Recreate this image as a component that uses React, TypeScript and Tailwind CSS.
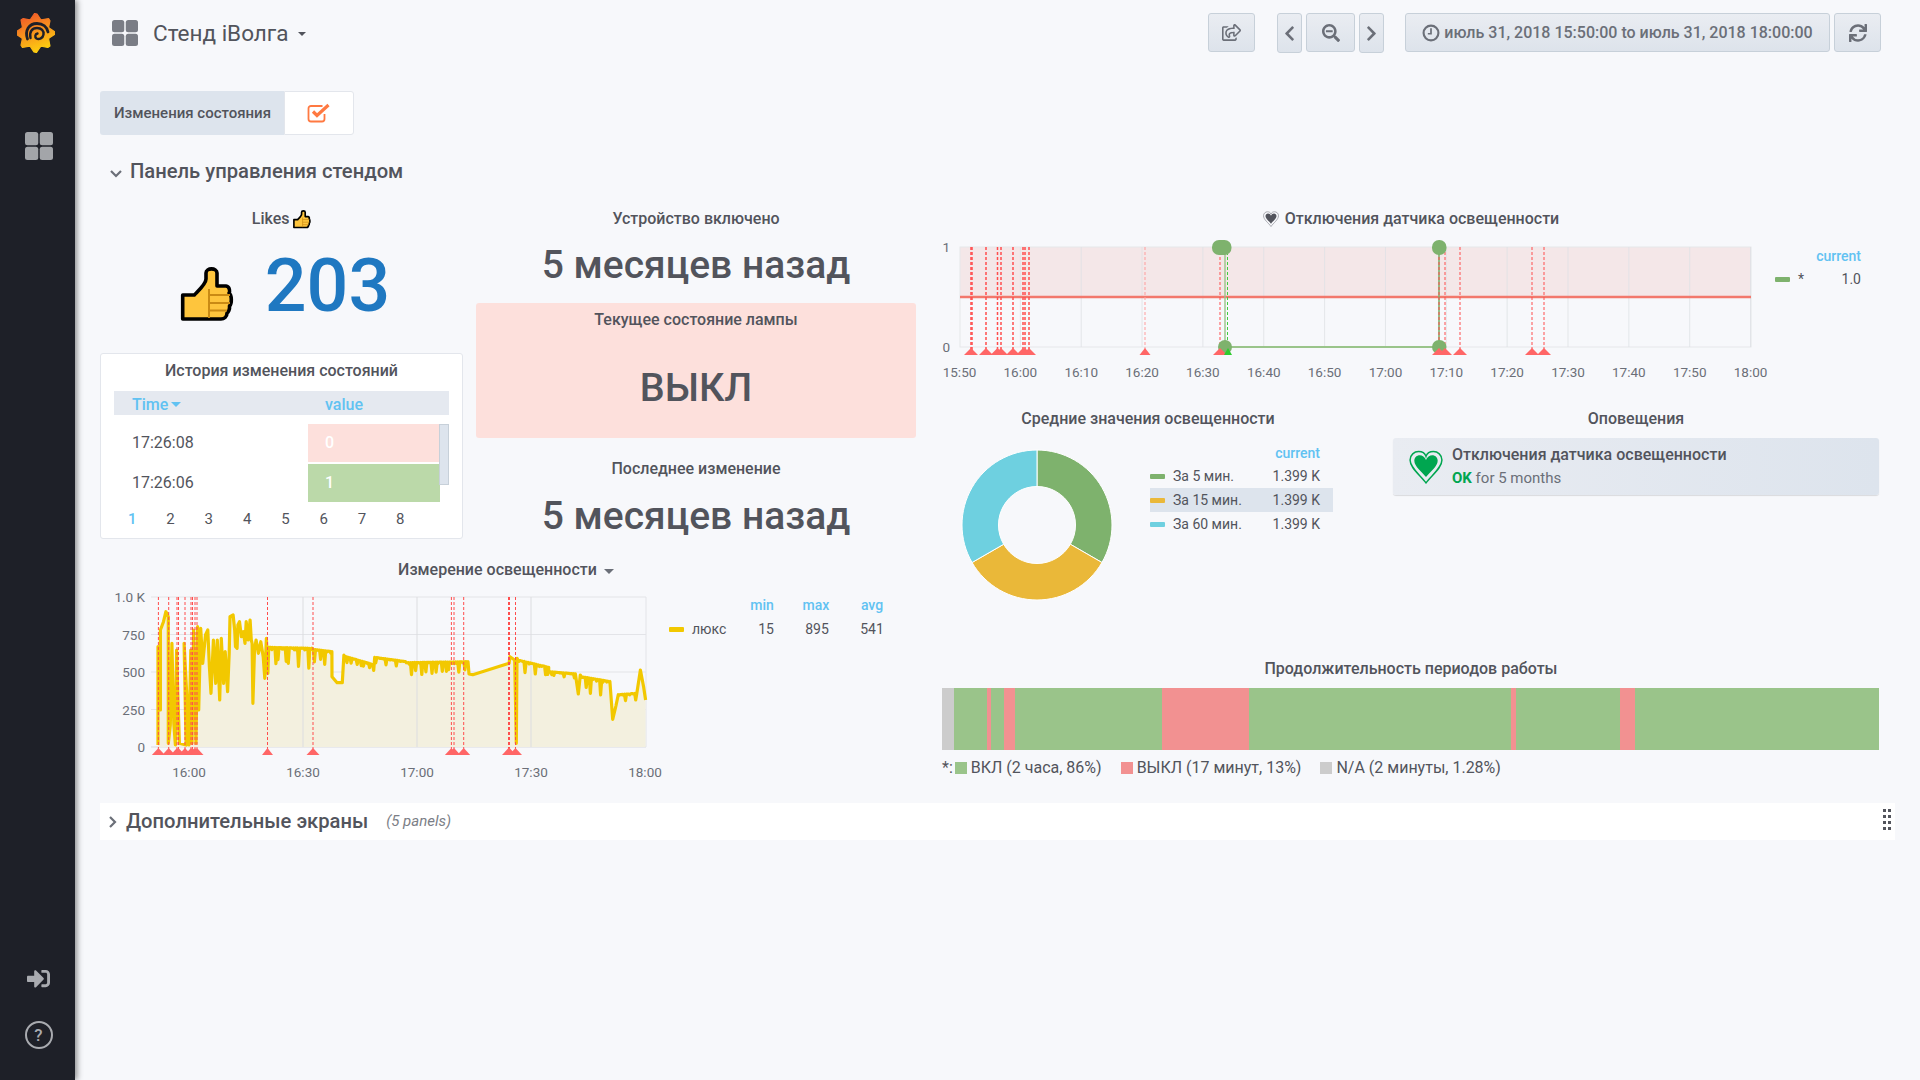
import React from "react";
import { FaChevronLeft, FaChevronRight, FaSearchMinus, FaSignInAlt, FaSync, FaRegShareSquare } from "react-icons/fa";

const AXIS = "#6b6f78";

function GridIcon({ size, color, gap }: { size: number; color: string; gap: number }) {
  const c = (size - gap) / 2;
  return (
    <svg width={size} height={size} viewBox={`0 0 ${size} ${size}`}>
      <rect x={0} y={0} width={c} height={c} rx={2.5} fill={color} />
      <rect x={c + gap} y={0} width={c} height={c} rx={2.5} fill={color} />
      <rect x={0} y={c + gap} width={c} height={c} rx={2.5} fill={color} />
      <rect x={c + gap} y={c + gap} width={c} height={c} rx={2.5} fill={color} />
    </svg>
  );
}

function Logo() {
  const teeth = 8;
  const pts: string[] = [];
  const step = (Math.PI * 2) / teeth;
  for (let i = 0; i < teeth; i++) {
    const a0 = i * step - Math.PI / 2 - 0.35;
    const seq: [number, number][] = [
      [14.5, 0],
      [19.5, step * 0.38],
      [19, step * 0.55],
      [14.5, step * 0.9],
    ];
    seq.forEach(([r, d]) => pts.push(`${18.5 + r * Math.cos(a0 + d)},${20 + r * Math.sin(a0 + d)}`));
  }
  return (
    <svg width="38" height="40" viewBox="0 0 38 40">
      <defs>
        <linearGradient id="lg" x1="0.2" y1="0" x2="0.6" y2="1">
          <stop offset="0" stopColor="#f0542a" />
          <stop offset="0.5" stopColor="#f7941d" />
          <stop offset="1" stopColor="#fdd10f" />
        </linearGradient>
      </defs>
      <polygon points={pts.join(" ")} fill="url(#lg)" stroke="url(#lg)" strokeWidth="1.2" strokeLinejoin="round" />
      <path d="M10.5 26 C7.5 17.5 12 10.5 20 10.5 C26 10.5 30 14 31 19" fill="none" stroke="#1e2028" strokeWidth="2.8" strokeLinecap="round" />
      <path d="M13.5 25 C12 19 15 15 20 15 C24.5 15 27 18 26.5 21.5 C26 25 22 27 19.5 25.5 C17.5 24 18 21 20.5 20.5" fill="none" stroke="#1e2028" strokeWidth="2.4" strokeLinecap="round" />
    </svg>
  );
}

function Thumb({ scale }: { scale: number }) {
  return (
    <svg width={54 * scale} height={56 * scale} viewBox="0 0 54 56" className="block">
      <path
        d="M2.7 29 H14.3 C19 24 26 18 26 13 V7 C26 1.5 37 1.5 37 7 V20 H46 C50 20.5 50 26 49 27 C52 29 52 38 49.5 40 C50 44 48 46.5 47 47 C47 51 44 53 41 53 H2.7 Z"
        fill="#fec53d"
        stroke="#000"
        strokeWidth={scale < 0.5 ? 5 : 3.6}
        strokeLinejoin="round"
      />
      <path d="M29 29 H50 M29 37 H50 M29 44.5 H47" stroke="#c98a14" strokeWidth="2" fill="none" />
      <path d="M29 23 V52" stroke="#c98a14" strokeWidth="2" fill="none" />
    </svg>
  );
}

function Heart({ size, fill, stroke, outline }: { size: number; fill: string; stroke: string; outline: boolean }) {
  return (
    <svg width={size} height={size} viewBox="0 0 32 32">
      {outline && (
        <path
          d="M16 31 C11 24 1 17 1 9.5 C1 4.5 5 1.5 9 1.5 C12 1.5 15 3 16 6 C17 3 20 1.5 23 1.5 C27 1.5 31 4.5 31 9.5 C31 17 21 24 16 31 Z"
          fill="none"
          stroke={stroke}
          strokeWidth="1.4"
        />
      )}
      <path
        d="M16 25.5 C12.5 20.5 5 15.5 5 10 C5 7 7.5 5 10 5 C12.5 5 15 6.5 16 9.5 C17 6.5 19.5 5 22 5 C24.5 5 27 7 27 10 C27 15.5 19.5 20.5 16 25.5 Z"
        fill={fill}
      />
    </svg>
  );
}

function Title({ children }: { children: React.ReactNode }) {
  return <div className="h-[22px] flex items-center justify-center text-[16px] font-medium leading-none">{children}</div>;
}

function Stat({ title, height, mt }: { title: string; height: string; mt: string }) {
  return (
    <div className={`${height} flex flex-col items-center`}>
      <Title>{title}</Title>
      <div className={`${mt} text-[39px] leading-[46px] font-medium`}>5 месяцев назад</div>
    </div>
  );
}

function Btn({ w, h = "h-[39px]", children }: { w: string; h?: string; children: React.ReactNode }) {
  return (
    <div
      className={`${w} ${h} flex items-center justify-center rounded-[3px] border border-[#c7d0d9] bg-gradient-to-b from-[#eaedf2] to-[#dde3eb] text-[#6b6f78]`}
    >
      {children}
    </div>
  );
}

function Tri({ x, y, color = "#ff6666", w = 7 }: { x: number; y: number; color?: string; w?: number }) {
  return <polygon points={`${x - w},${y} ${x + w},${y} ${x},${y - 7}`} fill={color} />;
}

function SensorChart() {
  const ox = 942;
  const oy = 235;
  const X = (x: number) => x - ox;
  const Y = (y: number) => y - oy;
  const labels = ["15:50", "16:00", "16:10", "16:20", "16:30", "16:40", "16:50", "17:00", "17:10", "17:20", "17:30", "17:40", "17:50", "18:00"];
  const ann = [971, 972, 986, 997.5, 1001, 1013, 1023, 1025, 1029, 1220, 1439, 1445, 1460, 1532, 1544];
  return (
    <svg width="835" height="150" className="block font-[Roboto,sans-serif]">
      <rect x={X(960)} y={Y(247)} width={791} height={50} fill="#f4e7e8" />
      <rect x={X(960)} y={Y(247)} width={791} height={100} fill="none" stroke="#e6e7ea" />
      {labels.map((l, i) => {
        const x = 959.5 + i * 60.85;
        return (
          <g key={l}>
            {i > 0 && <line x1={X(x)} x2={X(x)} y1={Y(247)} y2={Y(347)} stroke="#dfe1e5" strokeOpacity="0.8" />}
            <text x={X(x)} y={Y(377)} textAnchor="middle" fontSize="13.5" fill={AXIS}>
              {l}
            </text>
          </g>
        );
      })}
      <line x1={X(960)} x2={X(1751)} y1={Y(297)} y2={Y(297)} stroke="#f2786c" strokeWidth="2.4" />
      <text x={X(950)} y={Y(252)} textAnchor="end" fontSize="13.5" fill={AXIS}>1</text>
      <text x={X(950)} y={Y(352)} textAnchor="end" fontSize="13.5" fill={AXIS}>0</text>
      <line x1={X(1228)} x2={X(1439)} y1={Y(347)} y2={Y(347)} stroke="#9ac48a" strokeWidth="2.2" />
      <line x1={X(1225)} x2={X(1225)} y1={Y(247)} y2={Y(347)} stroke="#9ac48a" strokeWidth="1.4" />
      <line x1={X(1227.5)} x2={X(1227.5)} y1={Y(247)} y2={Y(350)} stroke="#3fce3f" strokeWidth="1" strokeDasharray="3 2" />
      <line x1={X(1439)} x2={X(1439)} y1={Y(247)} y2={Y(347)} stroke="#7eb26d" strokeWidth="1.6" />
      {ann.map((x, i) => (
        <line key={i} x1={X(x)} x2={X(x)} y1={Y(247)} y2={Y(350)} stroke="#ff4d4d" strokeWidth={x < 1030 ? 1.5 : 1} strokeDasharray="3 2" />
      ))}
      <line x1={X(1145)} x2={X(1145)} y1={Y(247)} y2={Y(350)} stroke="#ff9d9d" strokeWidth="1" strokeDasharray="3 2" />
      <rect x={X(1212)} y={Y(240)} width={19.5} height={15} rx={7} fill="#7eb26d" />
      <rect x={X(1432)} y={Y(240)} width={14.5} height={15} rx={7} fill="#7eb26d" />
      <rect x={X(1218)} y={Y(340)} width={14} height={14} rx={7} fill="#7eb26d" />
      <rect x={X(1432)} y={Y(340)} width={14.5} height={14} rx={7} fill="#7eb26d" />
      {[971, 986, 997.5, 1001, 1013, 1023, 1025, 1029, 1145, 1220, 1439, 1445, 1460, 1532, 1544].map((x, i) => (
        <Tri key={i} x={X(x)} y={Y(355)} w={x === 1145 ? 5.5 : 7} />
      ))}
      <Tri x={X(1228)} y={Y(355)} color="#2ecc2e" w={4} />
    </svg>
  );
}

function jag(x0: number, x1: number, y0: number, y1: number, amp: number, seed: number) {
  const out: [number, number][] = [];
  let i = 0;
  for (let x = x0; x < x1; x += 2.6) {
    const t = (x - x0) / (x1 - x0);
    const base = y0 + (y1 - y0) * t;
    const n = Math.abs(Math.sin(x * 0.37 + seed) * Math.sin(x * 0.113 + seed * 2));
    const dip = n > 0.55 ? amp * n : amp * 0.22 * n;
    out.push([x, base + (i % 2 === 0 ? 0 : dip)]);
    i++;
  }
  return out;
}

function buildLine() {
  const a: [number, number][] = [
    [172, 585], [172, 290], [178, 480], [178, 240], [186, 215], [192, 185], [198, 200], [198, 580], [203, 525], [207, 280], [212, 520], [216, 585],
    [219, 300], [222, 430], [226, 580], [243, 585], [238, 280], [244, 420], [250, 585], [255, 300], [258, 580], [262, 240], [268, 580], [272, 230],
    [275, 480], [280, 235], [285, 340], [292, 255], [298, 240], [302, 350], [306, 430], [312, 270], [318, 400], [322, 270], [328, 450], [332, 265],
    [338, 400], [342, 305], [348, 425], [352, 310], [354, 200], [362, 195], [366, 240], [368, 290], [372, 295], [374, 225], [378, 215], [383, 260], [388, 245], [392, 280], [395, 215], [400, 270], [405, 210], [408, 270],
    [410, 280], [412, 460], [416, 300], [420, 270], [426, 310], [432, 275], [438, 320], [442, 385], [446, 265], [450, 370],
  ];
  const b: [number, number][] = [
    ...jag(452, 565, 292, 295, 60, 1),
    ...jag(565, 612, 298, 305, 45, 2),
    [612, 380], [625, 398], [638, 398], [642, 315],
    ...jag(642, 720, 318, 345, 22, 3),
    ...jag(720, 800, 322, 335, 18, 4),
    ...jag(800, 960, 338, 335, 42, 5),
    [968, 374], [1060, 340], [1062, 320],
    [1074, 330], [1078, 580], [1080, 325],
    ...jag(1082, 1160, 330, 352, 35, 6),
    ...jag(1160, 1230, 365, 372, 12, 7),
    [1235, 432], [1240, 375],
    ...jag(1242, 1318, 380, 395, 50, 8),
    [1322, 508], [1330, 468],
    ...jag(1336, 1385, 434, 430, 22, 9),
    [1392, 360], [1400, 410], [1405, 450],
  ];
  return [...a, ...b];
}

function LightChart() {
  const ox = 100;
  const oy = 585;
  const X = (x: number) => x - ox;
  const Y = (y: number) => y - oy;
  const zx = (p: number) => X(90 + p / 2.529);
  const zy = (p: number) => Y(550 + p / 3);
  const pts = buildLine();
  const line = pts.map(([x, y]) => `${zx(x).toFixed(1)},${zy(y).toFixed(1)}`).join(" ");
  const area = `${zx(172)},${Y(747)} ${line} ${zx(1405)},${Y(747)}`;
  const ann = [158.4, 168.7, 177, 178.5, 185, 191, 192.5, 195, 197, 267.5, 313, 451.4, 454, 463.7, 508.5, 509.5, 515.5];
  return (
    <svg width="569" height="205" className="block shrink-0 font-[Roboto,sans-serif]">
      {[597, 634.5, 672, 709.5, 747].map((y, i) => (
        <g key={y}>
          <line x1={X(151)} x2={X(646)} y1={Y(y)} y2={Y(y)} stroke="#e3e4e8" strokeWidth={i === 4 ? 1.5 : 1.2} />
          <text x={X(145)} y={Y(y + 5)} textAnchor="end" fontSize="13.5" fill={AXIS}>
            {["1.0 K", "750", "500", "250", "0"][i]}
          </text>
        </g>
      ))}
      <line x1={X(646)} x2={X(646)} y1={Y(597)} y2={Y(747)} stroke="#e3e4e8" />
      <polygon points={area} fill="#f3f0df" />
      {["16:00", "16:30", "17:00", "17:30", "18:00"].map((l, i) => {
        const x = 189 + i * 114;
        return (
          <g key={l}>
            {i > 0 && i < 4 && <line x1={X(x)} x2={X(x)} y1={Y(597)} y2={Y(747)} stroke="#dcdde0" />}
            <text x={X(x)} y={Y(777)} textAnchor="middle" fontSize="13.5" fill={AXIS}>
              {l}
            </text>
          </g>
        );
      })}
      <polyline points={line} fill="none" stroke="#f2c800" strokeWidth="3.2" strokeLinejoin="round" />
      {ann.map((x, i) => (
        <line key={i} x1={X(x)} x2={X(x)} y1={Y(597)} y2={Y(750)} stroke="#ff4d4d" strokeWidth="1" strokeDasharray="3 2" />
      ))}
      {ann.map((x, i) => (
        <Tri key={i} x={X(x)} y={Y(755)} w={i === 9 ? 5.5 : 6.5} />
      ))}
    </svg>
  );
}

function Donut() {
  const cx = 76;
  const cy = 76;
  const R = 75;
  const r = 38.5;
  const arc = (a0: number, a1: number) => {
    const p = (rad: number, a: number) => `${cx + rad * Math.sin(a)} ${cy - rad * Math.cos(a)}`;
    return `M${p(R, a0)} A${R} ${R} 0 0 1 ${p(R, a1)} L${p(r, a1)} A${r} ${r} 0 0 0 ${p(r, a0)} Z`;
  };
  const t = (Math.PI * 2) / 3;
  return (
    <svg width="152" height="152" className="block">
      <path d={arc(0, t)} fill="#7eb26d" stroke="#fff" strokeWidth="1" />
      <path d={arc(t, 2 * t)} fill="#eab839" stroke="#fff" strokeWidth="1" />
      <path d={arc(2 * t, 3 * t)} fill="#6ed0e0" stroke="#fff" strokeWidth="1" />
    </svg>
  );
}

function PieRow({ color, label, active }: { color: string; label: string; active?: boolean }) {
  return (
    <div className={`h-[24px] flex items-center text-[14px] ${active ? "bg-[#dde4ed]" : ""}`}>
      <span className="w-[15px] h-[5px] rounded-[1px] mr-[8px]" style={{ backgroundColor: color }} />
      <span className="flex-1">{label}</span>
      <span className="mr-[13px]">1.399 K</span>
    </div>
  );
}

function Timeline() {
  const segs: [number, string][] = [
    [954, "#cccccc"], [987, "#9ac48a"], [991, "#f29191"], [1004, "#9ac48a"], [1015, "#f29191"], [1162, "#9ac48a"], [1249, "#f29191"], [1511, "#9ac48a"],
    [1516, "#f29191"], [1620, "#9ac48a"], [1634.5, "#f29191"], [1878.5, "#9ac48a"],
  ];
  let prev = 942;
  return (
    <div className="mt-[8px] flex h-[62px] w-[937px]">
      {segs.map(([end, c], i) => {
        const w = end - prev;
        prev = end;
        return <div key={i} className="h-full" style={{ width: w, backgroundColor: c }} />;
      })}
    </div>
  );
}

function Legend({ color, children }: { color: string; children: React.ReactNode }) {
  return (
    <span className="flex items-center mr-[19px]">
      <span className="w-[12px] h-[12px] mr-[4px]" style={{ backgroundColor: color }} />
      {children}
    </span>
  );
}

function HistoryTable() {
  return (
    <div className="h-[186px] rounded-[3px] border border-[#e3e6ec] bg-white px-[13px] flex flex-col">
      <div className="h-[27px] flex items-end justify-center text-[16px] font-medium leading-[20px]">История изменения состояний</div>
      <div className="mt-[10px] h-[24px] bg-[#e5e9f0] flex items-center pt-[3px] font-medium text-[16px] text-[#61c2f2]">
        <span className="w-[211px] pl-[18px] flex items-center">
          Time
          <span className="ml-[3px] w-0 h-0 border-x-[5px] border-x-transparent border-t-[5px] border-t-[#61c2f2]" />
        </span>
        <span>value</span>
      </div>
      <div className="relative mt-[9px] text-[16px]">
        <div className="flex h-[38px]">
          <span className="w-[194px] pl-[18px] flex items-center">17:26:08</span>
          <span className="w-[132px] bg-[#fde0dc] text-white font-medium flex items-center pl-[17px]">0</span>
        </div>
        <div className="mt-[2px] flex h-[38px]">
          <span className="w-[194px] pl-[18px] flex items-center">17:26:06</span>
          <span className="w-[132px] bg-[#bbd9a9] text-white font-medium flex items-center pl-[17px]">1</span>
        </div>
        <div className="absolute right-0 top-0 h-[61px] w-[10px] bg-[#dde4ed] border border-[#c7d0d9]" />
      </div>
      <div className="flex mt-[7px] h-[20px] items-center text-[15px] pl-[14px]">
        {["1", "2", "3", "4", "5", "6", "7", "8"].map((n, i) => (
          <span key={n} className={`w-[38.3px] ${i === 0 ? "text-[#61c2f2] font-medium" : ""}`}>{n}</span>
        ))}
      </div>
    </div>
  );
}

export default function App() {
  return (
    <div className="flex h-[1080px] overflow-hidden bg-[#f7f8fb] font-[Roboto,sans-serif] text-[#52545c]">
      <aside className="w-[75px] shrink-0 bg-[#1e2028] shadow-[2px_0_6px_rgba(0,0,0,0.45)] flex flex-col items-center relative z-10">
        <div className="mt-[13px] mr-[4px]"><Logo /></div>
        <div className="mt-[79px] ml-[2px]"><GridIcon size={28} color="#a3a5a9" gap={1.5} /></div>
        <div className="mt-auto ml-[2px] text-[#a9abb0]"><FaSignInAlt size={23} /></div>
        <div className="mt-[31px] mb-[31px] ml-[2px] w-[28px] h-[28px] rounded-full border-[2px] border-[#a9abb0] text-[#a9abb0] flex items-center justify-center text-[17px] font-medium leading-none">?</div>
      </aside>
      <main className="flex-1 pl-[25px]">
        <header className="h-[91px] flex justify-between pr-[39px]">
          <div className="flex items-start mt-[20px] ml-[12px]">
            <GridIcon size={26} color="#7a7d85" gap={1.5} />
            <span className="ml-[15px] text-[22.5px] leading-[26px]">Стенд iВолга</span>
            <span className="ml-[9px] mt-[12px] w-0 h-0 border-x-[4px] border-x-transparent border-t-[4px] border-t-[#52545c]" />
          </div>
          <div className="flex items-start mt-[13px] text-[14px]">
            <Btn w="w-[47px]"><FaRegShareSquare size={19} /></Btn>
            <div className="ml-[22px]"><Btn w="w-[25px]" h="h-[40px]"><FaChevronLeft size={17} /></Btn></div>
            <div className="ml-[4px]"><Btn w="w-[49px]"><FaSearchMinus size={18} /></Btn></div>
            <div className="ml-[4px]"><Btn w="w-[25px]" h="h-[40px]"><FaChevronRight size={17} /></Btn></div>
            <div className="ml-[21px]">
              <Btn w="w-[425px]">
                <svg width="18" height="18" viewBox="0 0 17 17" className="mr-[4px]">
                  <circle cx="8.5" cy="8.5" r="7" fill="none" stroke="#6b6f78" strokeWidth="2" />
                  <path d="M8.5 4 V9.2 H5.5" fill="none" stroke="#6b6f78" strokeWidth="1.6" />
                </svg>
                <span className="text-[16px] font-medium">июль 31, 2018 15:50:00 to июль 31, 2018 18:00:00</span>
              </Btn>
            </div>
            <div className="ml-[4px]"><Btn w="w-[47px]"><FaSync size={18} /></Btn></div>
          </div>
        </header>

        <div className="flex h-[44px]">
          <div className="w-[184px] shrink-0 bg-[#dde4ed] rounded-l-[3px] flex items-center pl-[14px] text-[15px] font-medium">Изменения состояния</div>
          <div className="w-[70px] bg-white border border-[#e3e6ec] rounded-r-[3px] flex items-center justify-center pr-[1px]">
            <svg width="24" height="20" viewBox="0 0 24 20">
              <path d="M15.5 3 H4 a2.5 2.5 0 0 0 -2.5 2.5 V16 a2.5 2.5 0 0 0 2.5 2.5 H15 a2.5 2.5 0 0 0 2.5 -2.5 V11" fill="none" stroke="#ff7941" strokeWidth="1.8" />
              <path d="M6 8.5 L10 12.5 L21.5 2" fill="none" stroke="#ff7941" strokeWidth="3.2" />
            </svg>
          </div>
        </div>

        <div className="h-[73px] flex items-start pl-[9px] pt-[24px]">
          <svg width="14" height="10" viewBox="0 0 14 10" className="mt-[10px]">
            <path d="M2 2 L7 7 L12 2" fill="none" stroke="#6b6f78" strokeWidth="2.2" />
          </svg>
          <span className="ml-[7px] text-[20.2px] leading-[24px] font-medium">Панель управления стендом</span>
        </div>

        <div className="flex h-[595px]">
          <div className="w-[816px] flex flex-col">
            <div className="flex h-[350px]">
              <div className="w-[363px]">
                <div className="h-[145px]">
                  <div className="h-[22px] flex items-center justify-center text-[16px] font-medium">
                    Likes<span className="ml-[4px] mt-[1px]"><Thumb scale={0.33} /></span>
                  </div>
                  <div className="flex items-center justify-center mt-[14px] pl-[7px]">
                    <span className="mt-[16px]"><Thumb scale={1} /></span>
                    <span className="ml-[31px] text-[73.5px] leading-[84px] font-medium text-[#1f78c1]">203</span>
                  </div>
                </div>
                <HistoryTable />
              </div>
              <div className="ml-[13px] w-[440px]">
                <Stat title="Устройство включено" height="h-[95px]" mt="mt-[12px]" />
                <div className="h-[135px] rounded-[3px] bg-[#fde0dc] flex flex-col items-center pt-[6px]">
                  <Title>Текущее состояние лампы</Title>
                  <div className="mt-[34px] text-[39.5px] leading-[46px] font-medium">ВЫКЛ</div>
                </div>
                <Stat title="Последнее изменение" height="h-[107px] pt-[20px]" mt="mt-[13px]" />
              </div>
            </div>
            <div className="h-[27px] flex items-center justify-center pb-[4px] pr-[4px] text-[16px] font-medium">
              Измерение освещенности
              <span className="ml-[7px] mt-[4px] w-0 h-0 border-x-[5px] border-x-transparent border-t-[5px] border-t-[#6b6f78]" />
            </div>
            <div className="flex">
              <LightChart />
              <div className="w-[247px] text-[14px]">
                <div className="flex mt-[10px] h-[20px] items-center font-medium text-[#61c2f2]">
                  <span className="ml-[77px] w-[32px] text-center">min</span>
                  <span className="ml-[22px] w-[32px] text-center">max</span>
                  <span className="ml-[24px] w-[32px] text-center">avg</span>
                </div>
                <div className="flex mt-[2px] h-[24px] items-center">
                  <span className="shrink-0 w-[15px] h-[5px] bg-[#f2c800] rounded-[1px]" />
                  <span className="shrink-0 ml-[8px] w-[58px]">люкс</span>
                  <span className="shrink-0 w-[32px] text-center">15</span>
                  <span className="shrink-0 ml-[19px] w-[32px] text-center">895</span>
                  <span className="shrink-0 ml-[23px] w-[32px] text-center">541</span>
                </div>
              </div>
            </div>
          </div>

          <div className="ml-[26px] w-[938px] flex flex-col">
            <div className="h-[27px] flex items-start justify-center">
              <div className="h-[22px] flex items-center text-[16px] font-medium">
                <Heart size={16} fill="#52545c" stroke="#8b8d93" outline />
                <span className="ml-[6px]">Отключения датчика освещенности</span>
              </div>
            </div>
            <div className="flex h-[173px]">
              <SensorChart />
              <div className="text-[14px] ml-[-2px] w-[105px]">
                <div className="h-[20px] mt-[11px] text-right pr-[19px] font-medium text-[#61c2f2] leading-[20px]">current</div>
                <div className="h-[24px] mt-[1px] flex items-center">
                  <span className="w-[15px] h-[5px] bg-[#7eb26d] rounded-[1px] mr-[8px]" />
                  <span className="flex-1">*</span>
                  <span className="mr-[19px]">1.0</span>
                </div>
              </div>
            </div>
            <div className="flex h-[250px]">
              <div className="w-[440px]">
                <div className="w-[412px]"><Title>Средние значения освещенности</Title></div>
                <div className="flex mt-[19px]">
                  <div className="ml-[19px]"><Donut /></div>
                  <div className="ml-[37px] w-[183px] -mt-[6px]">
                    <div className="h-[20px] text-right pr-[13px] text-[14px] font-medium text-[#61c2f2]">current</div>
                    <div className="mt-[1px]"><PieRow color="#7eb26d" label="За 5 мин." /></div>
                    <PieRow color="#eab839" label="За 15 мин." active />
                    <PieRow color="#6ed0e0" label="За 60 мин." />
                  </div>
                </div>
              </div>
              <div className="ml-[11px] w-[486px]">
                <Title>Оповещения</Title>
                <div className="mt-[8px] h-[57px] rounded-[3px] bg-gradient-to-r from-[#e9ecf2] to-[#dde4ed] shadow-[0_1px_1px_rgba(0,0,0,0.12)] flex items-center pl-[16px]">
                  <Heart size={34} fill="#00a650" stroke="#00a650" outline />
                  <div className="ml-[9px] flex flex-col">
                    <span className="text-[16px] font-medium leading-[22px]">Отключения датчика освещенности</span>
                    <span className="text-[15px] leading-[22px] mt-[1px] text-[#6b6f78]"><b className="font-bold text-[#00a650]">OK</b> for 5 months</span>
                  </div>
                </div>
              </div>
            </div>
            <div className="h-[22px] flex items-center justify-center text-[16px] font-medium">Продолжительность периодов работы</div>
            <Timeline />
            <div className="flex items-center mt-[6px] h-[24px] text-[16px]">
              <span className="mr-[2px]">*:</span>
              <Legend color="#9ac48a">ВКЛ (2 часа, 86%)</Legend>
              <Legend color="#f29191">ВЫКЛ (17 минут, 13%)</Legend>
              <Legend color="#cccccc">N/A (2 минуты, 1.28%)</Legend>
            </div>
          </div>
        </div>

        <div className="w-[1795px] h-[37px] bg-white flex items-center relative">
          <svg width="12" height="14" viewBox="0 0 12 14" className="ml-[7px]">
            <path d="M3 2 L8 7 L3 12" fill="none" stroke="#6b6f78" strokeWidth="2.2" />
          </svg>
          <span className="ml-[7px] text-[20.2px] font-medium">Дополнительные экраны</span>
          <span className="ml-[18px] text-[15px] italic text-[#7b7e86]">(5 panels)</span>
          <div className="absolute right-[4px] top-[6px] grid grid-cols-2 gap-x-[2px] gap-y-[3px]">
            {Array.from({ length: 8 }).map((_, i) => (
              <span key={i} className="w-[3px] h-[3px] bg-[#52545c]" />
            ))}
          </div>
        </div>
      </main>
    </div>
  );
}
